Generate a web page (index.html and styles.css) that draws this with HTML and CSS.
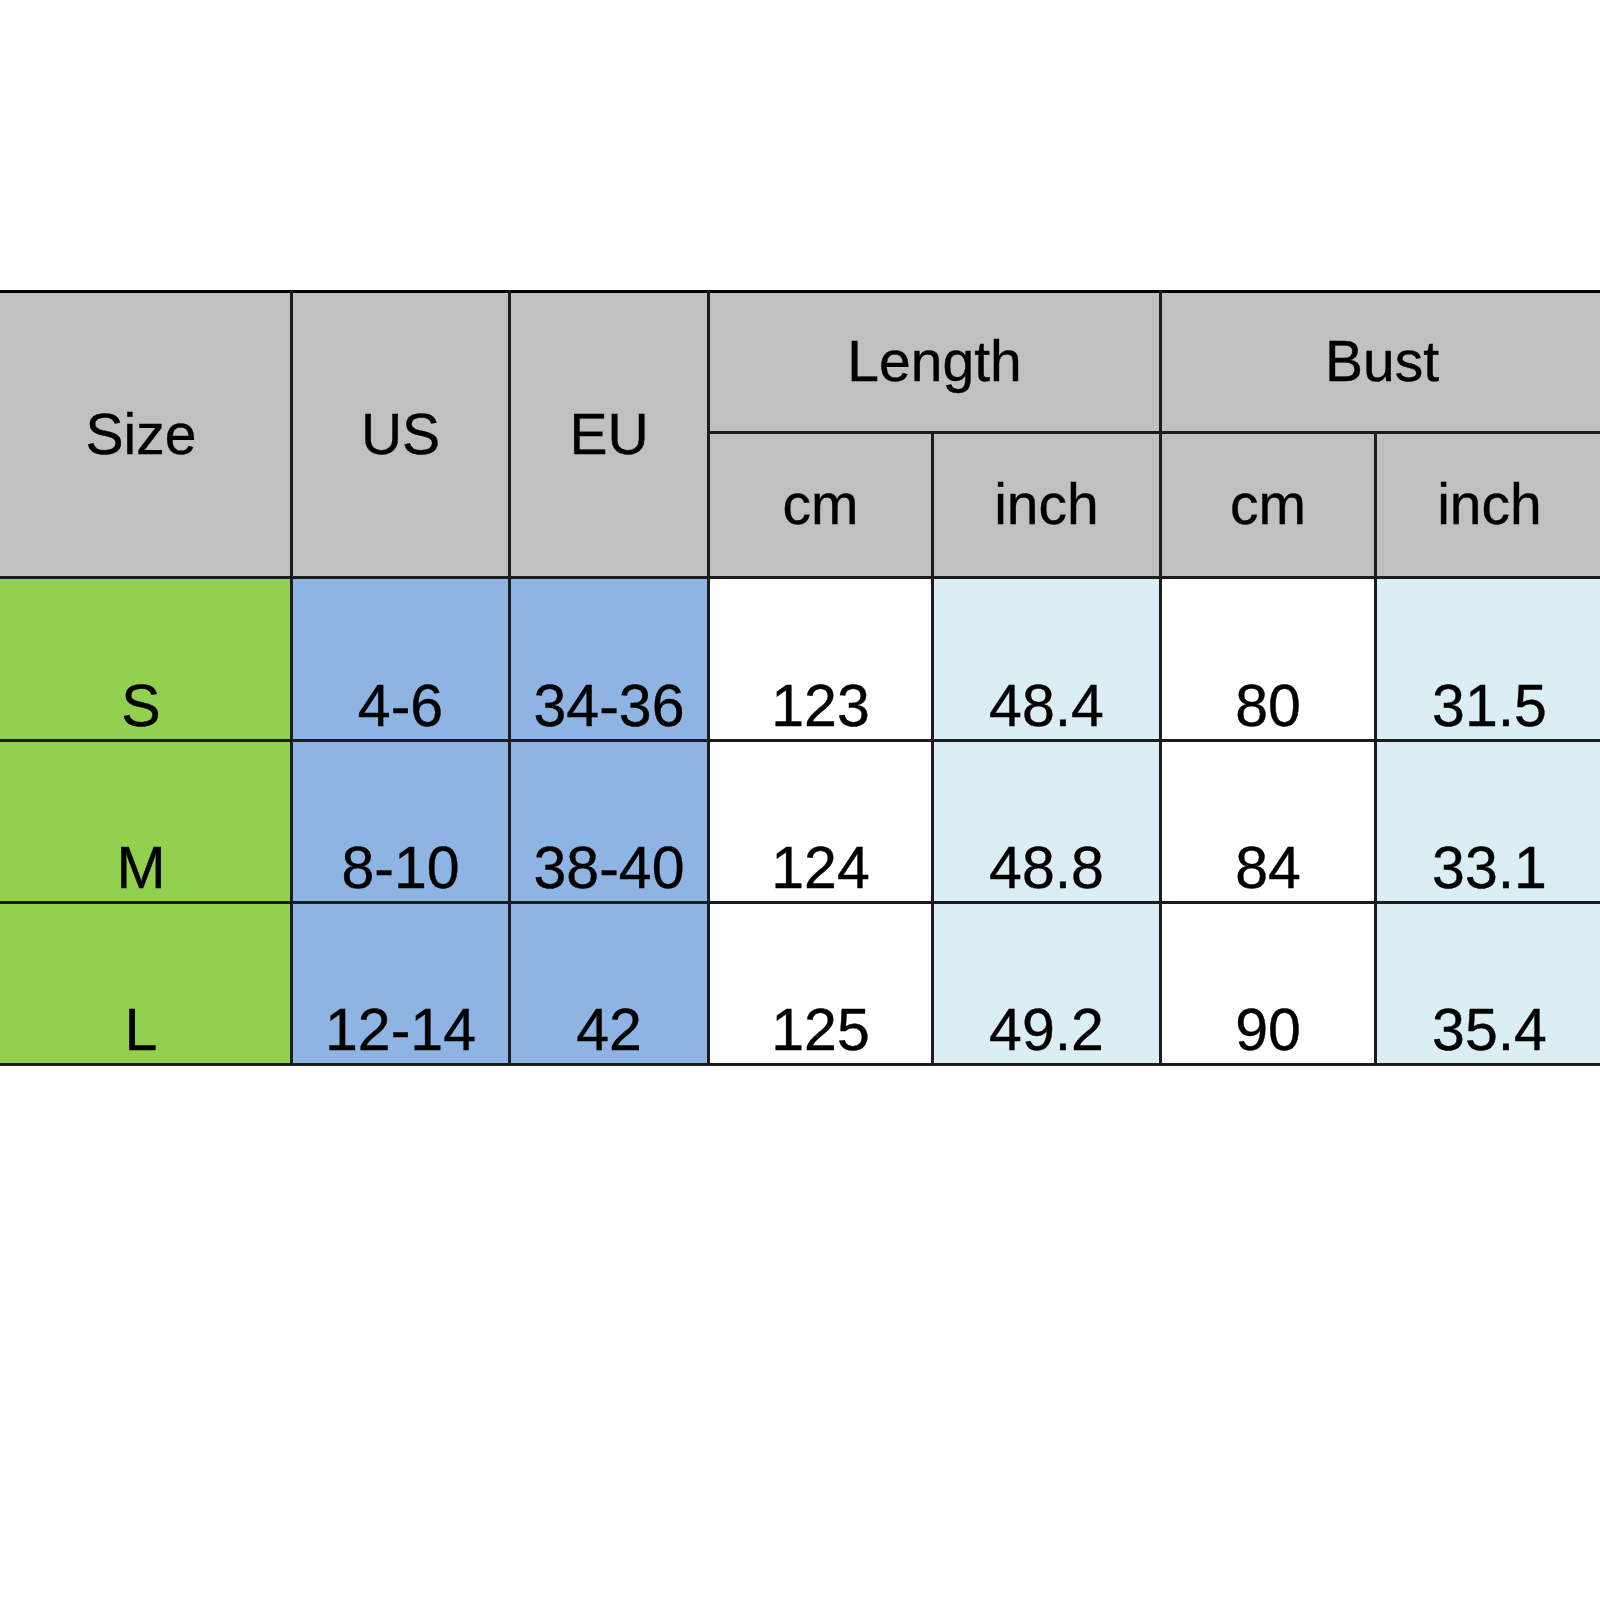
FILE: index.html
```html
<!DOCTYPE html>
<html>
<head>
<meta charset="utf-8">
<link rel="stylesheet" href="styles.css">
</head>
<body>
<div class="page">
  <div class="clip">
    <table class="chart">
      <colgroup>
        <col class="c-size"><col class="c-us"><col class="c-eu"><col class="c-lcm"><col class="c-lin"><col class="c-bcm"><col class="c-bin">
      </colgroup>
      <thead>
        <tr class="h1">
          <th rowspan="2">Size</th>
          <th rowspan="2">US</th>
          <th rowspan="2">EU</th>
          <th colspan="2">Length</th>
          <th colspan="2">Bust</th>
        </tr>
        <tr class="h2">
          <th>cm</th><th>inch</th><th>cm</th><th>inch</th>
        </tr>
      </thead>
      <tbody>
        <tr class="r1">
          <td class="green">S</td><td class="blue">4-6</td><td class="blue">34-36</td>
          <td class="white">123</td><td class="light">48.4</td><td class="white">80</td><td class="light">31.5</td>
        </tr>
        <tr class="r2">
          <td class="green">M</td><td class="blue">8-10</td><td class="blue">38-40</td>
          <td class="white">124</td><td class="light">48.8</td><td class="white">84</td><td class="light">33.1</td>
        </tr>
        <tr class="r3">
          <td class="green">L</td><td class="blue">12-14</td><td class="blue">42</td>
          <td class="white">125</td><td class="light">49.2</td><td class="white">90</td><td class="light">35.4</td>
        </tr>
      </tbody>
    </table>
  </div>
</div>
</body>
</html>
```

FILE: styles.css
```css
html, body {
  margin: 0;
  padding: 0;
  background: #ffffff;
}

.page {
  width: 1600px;
  height: 1600px;
  padding-top: 290px;
  box-sizing: border-box;
  overflow: hidden;
}

.clip {
  width: 1600px;
  overflow: hidden;
}

.chart {
  margin-left: -11px;
  width: 1613px;
  table-layout: fixed;
  border-collapse: collapse;
  font-family: "Liberation Sans", Arial, sans-serif;
  font-size: 57px;
  color: #000000;
  -webkit-text-stroke: 0.4px #000000;
}

.c-size { width: 301px; }
.c-us { width: 218px; }
.c-eu { width: 199px; }
.c-lcm { width: 224px; }
.c-lin { width: 228px; }
.c-bcm { width: 215px; }
.c-bin { width: 228px; }

.chart th,
.chart td {
  border: 3px solid #1c1c1c;
  padding: 0;
  text-align: center;
  font-weight: normal;
}

.chart thead tr.h1 th {
  border-top: 3px solid #000000;
}

.chart th {
  background: #c0c0c0;
  vertical-align: middle;
  line-height: 1.15;
}

.h1 { height: 141px; }
.h2 { height: 145px; }

.chart td {
  vertical-align: bottom;
  font-size: 59px;
  line-height: 1.1;
}

.r1 { height: 163px; }
.r2 { height: 162px; }
.r3 { height: 162px; }

.green { background: #92d050; }
.blue { background: #8db4e2; }
.white { background: #ffffff; }
.light { background: #daeef3; }
```
